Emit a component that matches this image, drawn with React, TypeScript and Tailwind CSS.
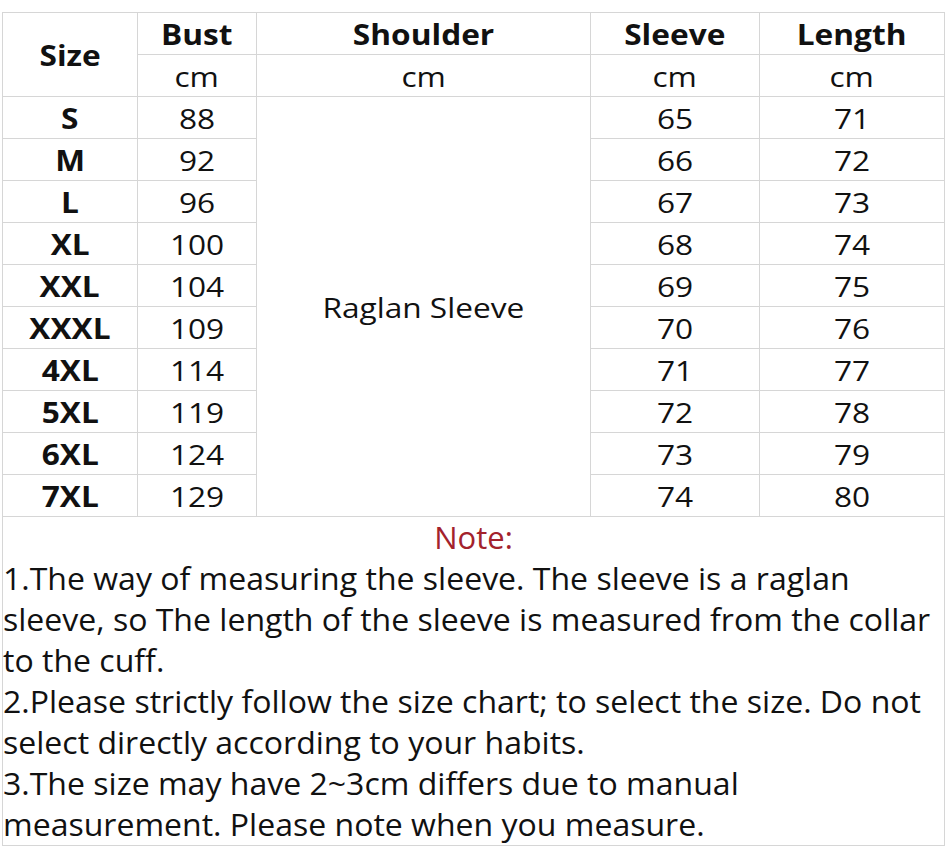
import React from "react";

const rows = [
  ["S", "88", "65", "71"],
  ["M", "92", "66", "72"],
  ["L", "96", "67", "73"],
  ["XL", "100", "68", "74"],
  ["XXL", "104", "69", "75"],
  ["XXXL", "109", "70", "76"],
  ["4XL", "114", "71", "77"],
  ["5XL", "119", "72", "78"],
  ["6XL", "124", "73", "79"],
  ["7XL", "129", "74", "80"],
];

const cell = "bg-white flex items-center justify-center pt-px text-[28px]";

function T({ children, bold }: { children: React.ReactNode; bold?: boolean }) {
  return (
    <span className={`inline-block scale-x-[1.13] whitespace-nowrap ${bold ? "font-bold" : ""}`}>
      {children}
    </span>
  );
}

const noteLines = [
  "1.The way of measuring the sleeve. The sleeve is a raglan",
  "sleeve, so The length of the sleeve is measured from the collar",
  "to the cuff.",
  "2.Please strictly follow the size chart; to select the size. Do not",
  "select directly according to your habits.",
  "3.The size may have 2~3cm differs due to manual",
  "measurement. Please note when you measure.",
];

export default function App() {
  return (
    <div className="w-[946px] h-[859px] bg-white font-['Open_Sans',sans-serif] text-[#111] pt-[12px] pl-[2px]">
      <div className="grid w-[943px] grid-cols-[134px_118px_333px_168px_184px] grid-rows-[repeat(12,41px)_328px] gap-px bg-[#d6d6d6] p-px">
        <div className={`${cell} row-span-2`}><T bold>Size</T></div>
        <div className={cell}><T bold>Bust</T></div>
        <div className={cell}><T bold>Shoulder</T></div>
        <div className={cell}><T bold>Sleeve</T></div>
        <div className={cell}><T bold>Length</T></div>
        <div className={cell}><T>cm</T></div>
        <div className={cell}><T>cm</T></div>
        <div className={cell}><T>cm</T></div>
        <div className={cell}><T>cm</T></div>
        {rows.map((r, i) => (
          <React.Fragment key={r[0]}>
            <div className={cell}><T bold>{r[0]}</T></div>
            <div className={cell}><T>{r[1]}</T></div>
            {i === 0 && (
              <div className={`${cell} row-span-10`}><T>Raglan Sleeve</T></div>
            )}
            <div className={cell}><T>{r[2]}</T></div>
            <div className={cell}><T>{r[3]}</T></div>
          </React.Fragment>
        ))}
        <div className="col-span-5 bg-white text-[31px] leading-[41px] whitespace-nowrap">
          <div className="text-center text-[#a3222c]">Note:</div>
          {noteLines.map((l) => (
            <div key={l} className="origin-left scale-x-[1.033]">{l}</div>
          ))}
        </div>
      </div>
    </div>
  );
}
